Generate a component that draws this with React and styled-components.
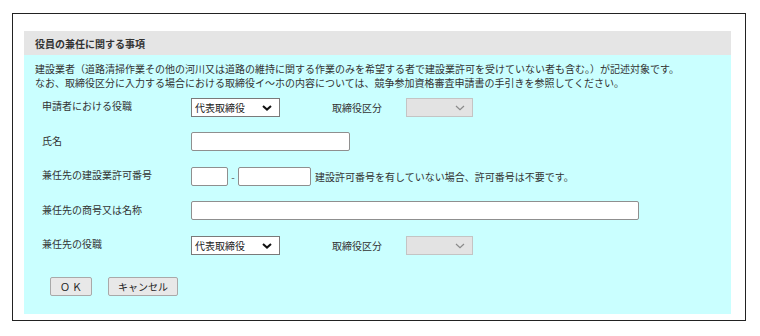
import styled, {createGlobalStyle} from 'styled-components';

const GlobalStyle = createGlobalStyle`
  html, body {
    margin: 0;
    padding: 0;
    background: #ffffff;
  }
  body {
    font-family: "Noto Sans CJK JP", "Noto Sans", sans-serif;
    color: #333333;
  }
`;

const Chevron = ({disabled}) => (
  <svg width="10" height="6" viewBox="0 0 10 6">
    <path
      d="M1 1 L5 4.6 L9 1"
      fill="none"
      stroke={disabled ? '#8a8a8a' : '#111111'}
      strokeWidth={disabled ? 1.2 : 2}
    />
  </svg>
);

const SelectBox = ({value, disabled}) => (
  <SelectWrap $disabled={disabled}>
    <SelectText>{value}</SelectText>
    <ChevronSlot>
      <Chevron disabled={disabled} />
    </ChevronSlot>
  </SelectWrap>
);

const App = () => {
  return (
    <>
      <GlobalStyle />
      <Frame>
        <Panel>
          <PanelHeader>役員の兼任に関する事項</PanelHeader>
          <PanelBody>
            <Notes>
              <p>
                建設業者（道路清掃作業その他の河川又は道路の維持に関する作業のみを希望する者で建設業許可を受けていない者も含む。）が記述対象です。
              </p>
              <p>
                なお、取締役区分に入力する場合における取締役イ～ホの内容については、競争参加資格審査申請書の手引きを参照してください。
              </p>
            </Notes>

            <Form>
              <Row>
                <Label>申請者における役職</Label>
                <SelectBox value="代表取締役" />
                <SubLabel>取締役区分</SubLabel>
                <SelectBox disabled />
              </Row>
              <Row>
                <Label>氏名</Label>
                <TextInput $width={159} />
              </Row>
              <Row>
                <Label>兼任先の建設業許可番号</Label>
                <TextInput $width={37} />
                <Dash>-</Dash>
                <TextInput $width={73} />
                <Hint>建設許可番号を有していない場合、許可番号は不要です。</Hint>
              </Row>
              <Row>
                <Label>兼任先の商号又は名称</Label>
                <TextInput $width={448} />
              </Row>
              <Row>
                <Label>兼任先の役職</Label>
                <SelectBox value="代表取締役" />
                <SubLabel>取締役区分</SubLabel>
                <SelectBox disabled />
              </Row>
              <Buttons>
                <Button $width={42}>Ｏ Ｋ</Button>
                <Button $width={70}>キャンセル</Button>
              </Buttons>
            </Form>
          </PanelBody>
        </Panel>
      </Frame>
    </>
  );
};

export default App;

const Frame = styled.div`
  box-sizing: border-box;
  margin: 13px 0 0 12px;
  width: 734px;
  height: 308px;
  border: 1px solid #222222;
  padding: 17px 14px 6px 11px;
  display: flex;
  flex-direction: column;
`;

const Panel = styled.div`
  flex: 1;
  display: flex;
  flex-direction: column;
`;

const PanelHeader = styled.div`
  height: 24px;
  background: #e5e5e5;
  padding-left: 11px;
  display: flex;
  align-items: center;
  font-size: 10px;
  font-weight: 700;
  color: #333333;
`;

const PanelBody = styled.div`
  flex: 1;
  background: #caffff;
  padding: 7px 0 0 11px;
`;

const Notes = styled.div`
  font-size: 10px;
  line-height: 14px;
  color: #333333;

  p {
    margin: 0;
    white-space: nowrap;
  }
`;

const Form = styled.div`
  margin-top: 7px;
  padding-left: 7px;
  display: flex;
  flex-direction: column;
  gap: 14.5px;
`;

const Row = styled.div`
  display: flex;
  align-items: center;
  height: 20px;
  font-size: 10px;
`;

const Label = styled.div`
  width: 149px;
  flex-shrink: 0;
  margin-top: -3px;
  color: #333333;
`;

const SubLabel = styled.div`
  width: 74px;
  margin-left: 52px;
  color: #333333;
`;

const SelectWrap = styled.div`
  position: relative;
  box-sizing: border-box;
  width: ${p => (p.$disabled ? '67px' : '89px')};
  height: 19px;
  border: 1px solid ${p => (p.$disabled ? '#c4c4c4' : '#7a7a7a')};
  background: ${p => (p.$disabled ? '#e3e3e3' : '#ffffff')};
  display: flex;
  align-items: center;
  padding-left: 3px;
`;

const SelectText = styled.span`
  font-size: 10px;
  color: #222222;
`;

const ChevronSlot = styled.span`
  position: absolute;
  right: 7px;
  top: 6px;
  display: flex;
  pointer-events: none;
`;

const TextInput = styled.input`
  box-sizing: border-box;
  width: ${p => p.$width}px;
  height: 19px;
  border: 1px solid #8f8f8f;
  border-radius: 2px;
  background: #ffffff;
  margin: 0;
  padding: 0 3px;
  outline: none;
`;

const Dash = styled.span`
  width: 10px;
  text-align: center;
  color: #555555;
`;

const Hint = styled.span`
  margin-left: 4px;
  white-space: nowrap;
  color: #333333;
`;

const Buttons = styled.div`
  display: flex;
  gap: 16px;
  margin-top: 7px;
  padding-left: 8px;
`;

const Button = styled.button`
  box-sizing: border-box;
  width: ${p => p.$width}px;
  height: 19px;
  border: 1px solid #a9a9a9;
  border-radius: 2px;
  background: #e8e8e8;
  font-family: "Noto Sans CJK JP", sans-serif;
  font-size: 10px;
  color: #222222;
  padding: 0;
  display: flex;
  align-items: center;
  justify-content: center;
`;
